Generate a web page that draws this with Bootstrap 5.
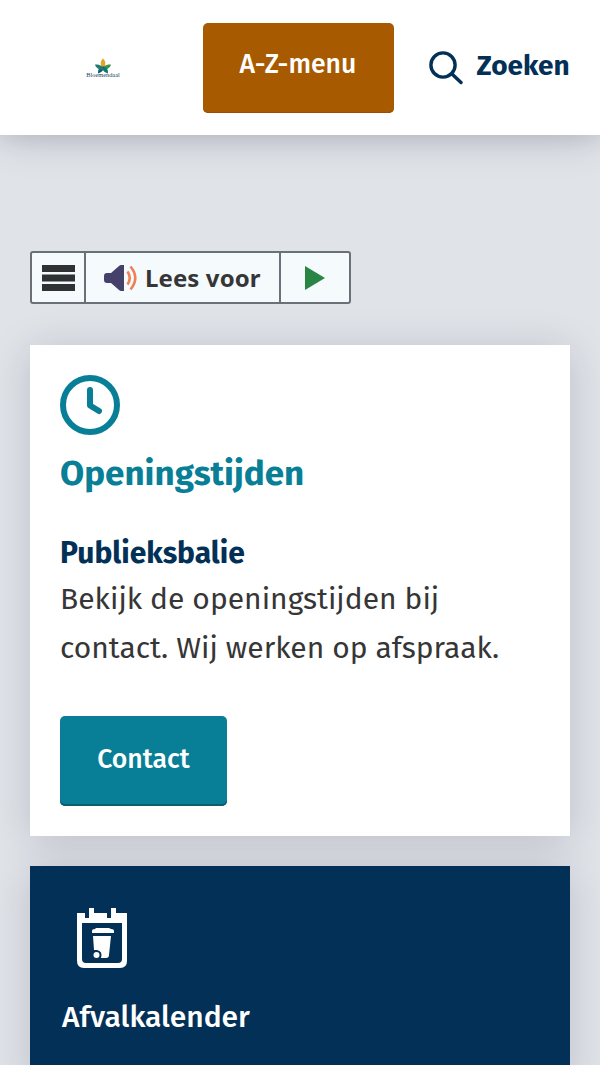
<!DOCTYPE html>
<html lang="nl">
<head>
<meta charset="utf-8">
<meta name="viewport" content="width=device-width, initial-scale=1">
<title>Bloemendaal</title>
<link href="https://cdn.jsdelivr.net/npm/bootstrap@5.3.0/dist/css/bootstrap.min.css" rel="stylesheet">
<style>
body{background:#e0e3e8;color:#363636;font-family:"Fira Sans","Noto Sans",sans-serif;height:1065px;overflow:hidden}
svg{display:block;flex:none}
.site-header{height:135px;box-shadow:0 0 45px rgba(0,0,50,.2),0 3px 20px rgba(0,0,0,.08);padding:22.5px 30px 0 86px}
.brand-logo{margin-top:35px;overflow:visible}
.menu-btn,.contact-btn{height:90px;border:0;border-radius:5px;color:#fff;font-weight:500;font-size:26.6px;line-height:39px;padding:0 0 7px}
.menu-btn,.menu-btn:hover{width:191px;background:#a85a00;box-shadow:inset 0 -1px #985000;color:#fff;margin-left:82.5px}
.contact-btn,.contact-btn:hover{width:167px;background:#087f96;box-shadow:inset 0 -2px #075f70;color:#fff;margin-top:44px;padding-bottom:4px}
.search-link{color:#033056;font-weight:700;font-size:28px;line-height:40px;margin:23px 0 0 35.5px}
.search-link svg{margin:5px 13.5px 0 0}
.reader{width:321px;height:53px;margin-top:116px;border:2px solid #6b7078;border-radius:3px;background:#f5fafd;font:700 24px/49px "Noto Sans",sans-serif}
.reader>*+*{border-left:2px solid #6b7078}
.reader-menu{width:53px;padding-right:1px}.reader-listen{width:195px;margin-left:-1px;padding-left:18px}
.reader-label{margin-left:7px;padding-bottom:1px;letter-spacing:.1px}
.info-card{height:491px;margin-top:41px;padding:30px;box-shadow:0 5px 40px rgba(0,0,50,.16)}
.info-title{font-size:35px;line-height:42px;font-weight:700;color:#087f96;margin:17px 0 0}
.info-sub{font-size:30px;line-height:36px;font-weight:700;color:#033056;margin:41px 0 0}
.info-text{font-size:30px;line-height:48.6px;margin:4px 0 0}
.waste-card{height:220px;margin-top:30px;background:#033056;color:#fff;padding:42px 32px;box-shadow:0 5px 40px rgba(0,0,50,.16)}
.waste-icon{margin-left:15px}
.waste-title{font-size:30px;line-height:38px;font-weight:500;margin:29px 0 0}
.page-column{width:540px}
.fit{display:inline-block;white-space:nowrap}
</style>
</head>
<body>
<header class="site-header bg-white d-flex align-items-start position-relative">
<svg class="brand-logo" width="34" height="22" viewBox="0 0 34 22" aria-label="Bloemendaal">
<g transform="translate(17 9.5)"><path d="M0 2C-4-4-2-7 0-9 2-7 4-4 0 2Z" fill="#e6a32b"/><path d="M-1 2C1-3 5-3 8-3 7 1 3 3-1 2Z" fill="#3e914a"/><path d="M-1-1C5 0 5 3 5 6 2 5-1 3-1-1Z" fill="#0f7771"/><path d="M1-1C-5 0-5 3-5 6-2 5 1 3 1-1Z" fill="#125a6c"/><path d="M1 2C-1-3-5-3-8-3-7 1-3 3 1 2Z" fill="#227b73"/></g>
<text x="0.3" y="18.5" font-family="Liberation Serif" font-size="6.5" textLength="33.4" lengthAdjust="spacingAndGlyphs" fill="#164765">Bloemendaal</text></svg>
<button class="btn menu-btn"><span class="fit">A-Z-menu</span></button>
<a class="search-link d-flex text-decoration-none" href="#"><svg width="34" height="34" viewBox="0 0 34 34" fill="none" stroke="#033056" stroke-width="3.4" stroke-linecap="round"><circle cx="14" cy="14" r="12.1"/><path d="M23 23L32 31.5"/></svg><span class="fit">Zoeken</span></a>
</header>
<main class="page-column mx-auto">
<div class="reader d-flex">
<div class="reader-menu d-flex align-items-center justify-content-center"><svg width="33" height="26" viewBox="0 0 33 26" fill="#2f3132"><path d="M0 0H33V7H0ZM0 9.5H33V16.5H0ZM0 19H33V26H0Z"/></svg></div>
<div class="reader-listen d-flex align-items-center"><svg width="34" height="26" viewBox="0 0 34 26"><path d="M0 11Q0 8 3 8H7L15 1Q16 0 17 0H20V26H17Q16 26 15 25L7 18H3Q0 18 0 15Z" fill="#44426a"/><path d="M23.5 6.5Q28 13 23.5 19.5M26.5 1.5Q36 13 26.5 24.5" fill="none" stroke="#ed8055" stroke-width="2.6"/></svg><span class="reader-label">Lees voor</span></div>
<div class="flex-fill d-flex align-items-center justify-content-center"><svg width="20" height="24"><path d="M0 0L20 12 0 24Z" fill="#288544"/></svg></div>
</div>
<section class="info-card bg-white">
<svg width="60" height="60" viewBox="0 0 60 60" fill="none" stroke="#087f96" stroke-width="6"><circle cx="30" cy="30" r="27"/><path d="M30 15V30.5L39 36" stroke-linecap="round" stroke-linejoin="round"/></svg>
<h2 class="info-title"><span class="fit">Openingstijden</span></h2>
<h3 class="info-sub"><span class="fit">Publieksbalie</span></h3>
<p class="info-text"><span class="fit">Bekijk de openingstijden bij</span><br><span class="fit">contact. Wij werken op afspraak.</span></p>
<button class="btn contact-btn"><span class="fit">Contact</span></button>
</section>
<section class="waste-card">
<svg class="waste-icon" width="50" height="61" viewBox="0 0 50 61"><path fill="#fff" fill-rule="evenodd" d="M0 5H8V10H12V0H17V5H30V10H34V0H39V5H50V53Q50 60 43 60H7Q0 60 0 53ZM5 15V51Q5 55 9 55H41Q45 55 45 51V15Z"/><path fill="#fff" d="M15 25V23Q15 21 18 21L19 20H32L34 21Q37 21 37 23V25ZM16 28H34L32 47Q32 50 29 50H24Q26 43 20 42H17Z"/><circle cx="19.5" cy="47" r="3" fill="#fff"/></svg>
<h2 class="waste-title"><span class="fit">Afvalkalender</span></h2>
</section>
</main>
</body>
</html>
